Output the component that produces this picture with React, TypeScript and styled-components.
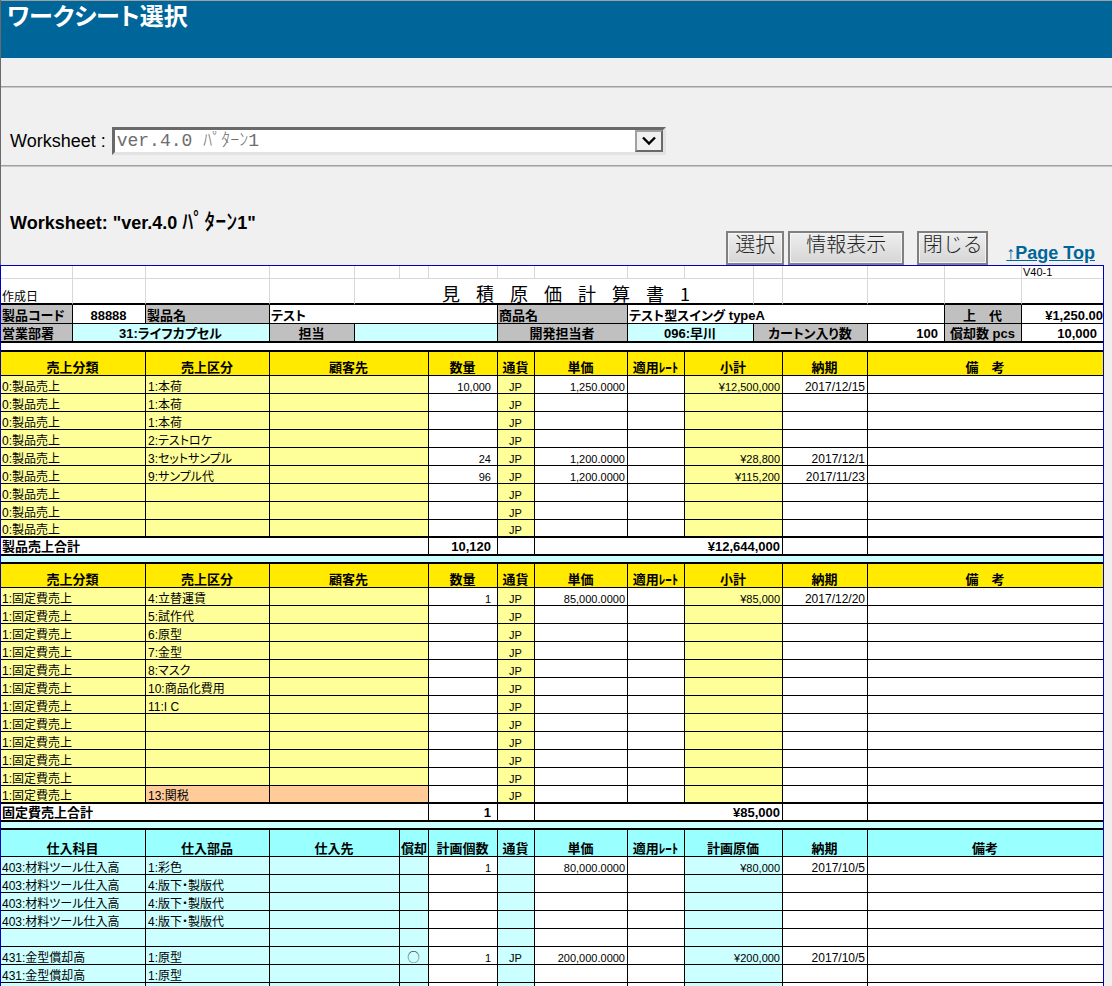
import React from "react";
import styled, { createGlobalStyle, css } from "styled-components";

const latin = `"Liberation Sans", "Noto Sans CJK JP", sans-serif`;
const gothic = `"Noto Sans CJK JP", sans-serif`;

const colors = {
  white: "#ffffff",
  gray: "#c0c0c0",
  cyan: "#ccffff",
  aqua: "#99ffff",
  gold: "#ffea00",
  yellow: "#ffff99",
  peach: "#ffcc99",
};
type Fill = keyof typeof colors;

const GlobalStyle = createGlobalStyle`
  *, *::before, *::after { box-sizing: border-box; }
  body { margin: 0; background: #f0f0f0; color: #000; font-family: ${latin}; }
`;

const Page = styled.div`
  height: 100vh;
  overflow: hidden;
`;

const Top = styled.div`
  border-left: 1px solid #696969;
`;

const Header = styled.header`
  height: 58px;
  margin-bottom: 28px;
  padding: 0 6px;
  border-top: 1px solid #a0a0a0;
  background: #006699;
  color: #fff;
`;

const Title = styled.h1`
  margin: 0;
  font: bold 24px/28px ${gothic};
  font-feature-settings: "palt";
`;

const Rule = styled.hr`
  height: 2px;
  margin: 0;
  border: 0;
  border-top: 1px solid #a0a0a0;
  background: #c8c8c8;
`;

const Picker = styled.form`
  display: flex;
  align-items: center;
  gap: 6px;
  height: 77px;
  padding: 29px 9px 0;
  font-size: 18px;
`;

const SelectFrame = styled.span`
  display: flex;
  width: 554px;
  height: 28px;
  border: 3px solid;
  border-color: #696969 #e3e3e3 #e3e3e3 #696969;
  background: #fff;
`;

const Select = styled.select`
  flex: 1;
  min-width: 0;
  padding: 0 2px;
  border: 0;
  appearance: none;
  background: transparent;
  color: #6d6d6d;
  font: 300 18px/20px "Liberation Mono", "Noto Sans CJK JP", monospace;
`;

const SelectArrow = styled.span`
  display: flex;
  align-items: center;
  justify-content: center;
  width: 28px;
  border: 2px solid;
  border-color: #a0a0a0 #696969 #696969 #a0a0a0;
  background: #f0f0f0;
`;

const SheetBar = styled.div`
  display: flex;
  justify-content: space-between;
  height: 98px;
  padding: 44px 17px 0 9px;
`;

const SheetName = styled.h2`
  margin: 0;
  font-size: 18px;
  line-height: 22px;
`;

const KanaName = styled.span`
  font-size: 22px;
  font-weight: 500;
`;

const Actions = styled.div`
  display: flex;
  align-items: flex-end;
`;

const Button = styled.button<{ $width: number; $after: number }>`
  width: ${(p) => p.$width}px;
  height: 34px;
  margin-right: ${(p) => p.$after}px;
  padding: 0 0 8px;
  border: 2px solid #808080;
  box-shadow: inset 0 0 0 1px #f4f4f4;
  background: linear-gradient(#f0f0f0, #d4d4d4) border-box;
  color: #222;
  font: 300 20px/22px ${gothic};
`;

const TopLink = styled.a`
  color: #006699;
  font-size: 18px;
  font-weight: bold;
  line-height: 24px;
`;

const Sheet = styled.table`
  width: calc(100% - 8px);
  table-layout: fixed;
  border: 1px solid #0000c0;
  border-bottom: 0;
  border-spacing: 0;
  background: #fff;
  font: 12px/11px ${latin};
  font-feature-settings: "palt";
  white-space: nowrap;
`;

const Row = styled.tr<{ $height?: number }>`
  height: ${(p) => p.$height ?? 18}px;
`;

type CellProps = {
  $fill?: Fill;
  $align?: "left" | "center" | "right";
  $bold?: boolean;
  $thick?: boolean;
  $soft?: boolean;
  $pad?: number;
  $small?: boolean;
};

const cellStyle = css<CellProps>`
  padding: 0 ${(p) => p.$pad ?? 2}px 0 1px;
  border: solid ${(p) => (p.$soft ? "#d8d8d8" : "#000")};
  border-width: 0 1px ${(p) => (p.$thick ? 2 : 1)}px 0;
  border-bottom-color: ${(p) => (p.$thick || !p.$soft ? "#000" : "#d8d8d8")};
  background: ${(p) => colors[p.$fill ?? "white"]};
  text-align: ${(p) => p.$align ?? "left"};
  vertical-align: bottom;
  font-weight: ${(p) => (p.$bold ? "bold" : "normal")};
  font-size: ${(p) => (p.$small ? 11 : p.$bold ? 13 : 12)}px;
  line-height: ${(p) => (p.$bold ? 14 : 11)}px;
  &:last-child { border-right: 0; }
`;

const Cell = styled.td<CellProps>`${cellStyle}`;
const HeadCell = styled.th<CellProps>`${cellStyle}`;

const KindCell = styled(Cell)`
  padding: 0 0 0 2px;
`;

const TitleCell = styled(Cell)`
  padding-left: 26px;
  font: 18px/19px ${gothic};
  font-feature-settings: normal;
`;

const Heading = styled.span`
  display: inline-flex;
  gap: 16px;
`;

const columnWidths = [72, 73, 124, 85, 45, 29, 69, 37, 93, 57, 69, 29, 85, 77, 77];

type Line = {
  account: string;
  kind?: string;
  mark?: string;
  qty?: string;
  currency?: string;
  price?: string;
  subtotal?: string;
  date?: string;
  customs?: boolean;
};

const productSales: Line[] = [
  { account: "0:製品売上", kind: "1:本荷", qty: "10,000", currency: "JP", price: "1,250.0000", subtotal: "¥12,500,000", date: "2017/12/15" },
  { account: "0:製品売上", kind: "1:本荷", currency: "JP" },
  { account: "0:製品売上", kind: "1:本荷", currency: "JP" },
  { account: "0:製品売上", kind: "2:テストロケ", currency: "JP" },
  { account: "0:製品売上", kind: "3:セットサンプル", qty: "24", currency: "JP", price: "1,200.0000", subtotal: "¥28,800", date: "2017/12/1" },
  { account: "0:製品売上", kind: "9:サンプル代", qty: "96", currency: "JP", price: "1,200.0000", subtotal: "¥115,200", date: "2017/11/23" },
  { account: "0:製品売上", currency: "JP" },
  { account: "0:製品売上", currency: "JP" },
  { account: "0:製品売上", currency: "JP" },
];

const fixedSales: Line[] = [
  { account: "1:固定費売上", kind: "4:立替運賃", qty: "1", currency: "JP", price: "85,000.0000", subtotal: "¥85,000", date: "2017/12/20" },
  ...["5:試作代", "6:原型", "7:金型", "8:マスク", "10:商品化費用", "11:I C", "", "", "", ""].map((kind) => ({
    account: "1:固定費売上",
    kind,
    currency: "JP",
  })),
  { account: "1:固定費売上", kind: "13:関税", currency: "JP", customs: true },
];

const purchases: Line[] = [
  { account: "403:材料ツール仕入高", kind: "1:彩色", qty: "1", price: "80,000.0000", subtotal: "¥80,000", date: "2017/10/5" },
  { account: "403:材料ツール仕入高", kind: "4:版下・製版代" },
  { account: "403:材料ツール仕入高", kind: "4:版下・製版代" },
  { account: "403:材料ツール仕入高", kind: "4:版下・製版代" },
  { account: "" },
  { account: "431:金型償却高", kind: "1:原型", mark: "◯", qty: "1", currency: "JP", price: "200,000.0000", subtotal: "¥200,000", date: "2017/10/5" },
  { account: "431:金型償却高", kind: "1:原型" },
  { account: "" },
];

type SectionProps = {
  titles: string[];
  lines: Line[];
  head: Fill;
  body: Fill;
  headHeight: number;
  marks?: boolean;
  total?: { label: string; qty: string; amount: string };
};

function Section({ titles, lines, head, body, headHeight, marks, total }: SectionProps) {
  const spans = marks ? [2, 1, 2, 1, 1, 1, 1, 1, 2, 1, 3] : [2, 1, 3, 1, 1, 1, 1, 2, 1, 3];
  return (
    <tbody>
      <Row $height={headHeight}>
        {titles.map((title, i) => (
          <HeadCell key={title} scope="col" colSpan={spans[i]} $fill={head} $align="center" $bold>
            {title}
          </HeadCell>
        ))}
      </Row>
      {lines.map((line, i) => {
        const thick = !!total && i === lines.length - 1;
        const kindFill = line.customs ? "peach" : body;
        return (
          <Row key={i}>
            <Cell colSpan={2} $fill={body} $thick={thick}>{line.account}</Cell>
            <KindCell $fill={kindFill} $thick={thick}>{line.kind}</KindCell>
            <Cell colSpan={marks ? 2 : 3} $fill={kindFill} $thick={thick} />
            {marks && <Cell $fill={body} $align="center">{line.mark}</Cell>}
            <Cell $align="right" $thick={thick} $small $pad={6}>{line.qty}</Cell>
            <Cell $fill={body} $align="center" $thick={thick} $small>{line.currency}</Cell>
            <Cell $align="right" $thick={thick} $small>{line.price}</Cell>
            <Cell $thick={thick} />
            <Cell colSpan={2} $fill={body} $align="right" $thick={thick} $small>{line.subtotal}</Cell>
            <Cell $align="right" $thick={thick}>{line.date}</Cell>
            <Cell colSpan={3} $thick={thick} />
          </Row>
        );
      })}
      {total && (
        <>
          <Row>
            <Cell colSpan={6} $bold $thick>{total.label}</Cell>
            <Cell $bold $thick $align="right" $pad={6}>{total.qty}</Cell>
            <Cell $thick />
            <Cell colSpan={4} $bold $thick $align="right">{total.amount}</Cell>
            <Cell $thick />
            <Cell colSpan={3} $thick />
          </Row>
          <Row $height={8}>
            <Cell colSpan={16} $fill="cyan" $thick />
          </Row>
        </>
      )}
    </tbody>
  );
}

const salesTitles = ["売上分類", "売上区分", "顧客先", "数量", "通貨", "単価", "適用ﾚｰﾄ", "小計", "納期", "備　考"];
const purchaseTitles = ["仕入科目", "仕入部品", "仕入先", "償却", "計画個数", "通貨", "単価", "適用ﾚｰﾄ", "計画原価", "納期", "備考"];

export default function App() {
  return (
    <Page>
      <GlobalStyle />
      <Top id="top">
        <Header>
          <Title>ワークシート選択</Title>
        </Header>
        <Rule />
        <Picker>
          <label htmlFor="worksheet">Worksheet :</label>
          <SelectFrame>
            <Select id="worksheet">
              <option>ver.4.0 ﾊﾟﾀｰﾝ1</option>
            </Select>
            <SelectArrow aria-hidden>
              <svg width="14" height="10" viewBox="0 0 14 10">
                <path d="M1 1.5 7 7.5 13 1.5" fill="none" stroke="#000" strokeWidth="2.4" />
              </svg>
            </SelectArrow>
          </SelectFrame>
        </Picker>
        <Rule />
        <SheetBar>
          <SheetName>
            Worksheet: "ver.4.0 <KanaName>ﾊﾟﾀｰﾝ</KanaName>1"
          </SheetName>
          <Actions>
            <Button type="button" $width={58} $after={4}>選択</Button>
            <Button type="button" $width={116} $after={13}>情報表示</Button>
            <Button type="button" $width={71} $after={18}>閉じる</Button>
            <TopLink href="#top">↑Page Top</TopLink>
          </Actions>
        </SheetBar>
      </Top>
      <Sheet>
        <colgroup>
          {columnWidths.map((width, i) => (
            <col key={i} width={width} />
          ))}
          <col />
        </colgroup>
        <tbody>
          <Row $height={13}>
            {columnWidths.map((_, i) => (
              <Cell key={i} $soft />
            ))}
            <Cell $soft $small>V40-1</Cell>
          </Row>
          <Row $height={26}>
            <Cell $soft $thick>作成日</Cell>
            <Cell $soft $thick />
            <Cell $soft $thick />
            <Cell $soft $thick />
            <TitleCell colSpan={7} $soft $thick $align="center">
              <Heading>
                {[..."見積原価計算書1"].map((char) => (
                  <span key={char}>{char}</span>
                ))}
              </Heading>
            </TitleCell>
            <Cell $soft $thick />
            <Cell $soft $thick />
            <Cell $soft $thick />
            <Cell $soft $thick />
            <Cell $soft $thick />
          </Row>
          <Row $height={19}>
            <Cell $fill="gray" $bold>製品コード</Cell>
            <Cell $bold $align="center">88888</Cell>
            <Cell $fill="gray" $bold>製品名</Cell>
            <Cell colSpan={4} $bold>テスト</Cell>
            <Cell colSpan={2} $fill="gray" $bold>商品名</Cell>
            <Cell colSpan={5} $bold>テスト型スイング typeA</Cell>
            <Cell $fill="gray" $bold $align="center">上　代</Cell>
            <Cell $bold $align="right" $pad={0}>¥1,250.00</Cell>
          </Row>
          <Row $height={19}>
            <Cell $thick $fill="gray" $bold>営業部署</Cell>
            <Cell $thick colSpan={2} $fill="cyan" $bold $align="center">31:ライフカプセル</Cell>
            <Cell $thick $fill="gray" $bold $align="center">担当</Cell>
            <Cell $thick colSpan={3} $fill="cyan" />
            <Cell $thick colSpan={2} $fill="gray" $bold $align="center">開発担当者</Cell>
            <Cell $thick colSpan={2} $fill="cyan" $bold $align="center">096:早川</Cell>
            <Cell $thick colSpan={2} $fill="gray" $bold $align="center">カートン入り数</Cell>
            <Cell $thick $bold $align="right" $pad={6}>100</Cell>
            <Cell $thick $fill="gray" $bold $align="center">償却数 pcs</Cell>
            <Cell $thick $bold $align="right" $pad={6}>10,000</Cell>
          </Row>
          <Row $height={9}>
            <Cell colSpan={16} $thick />
          </Row>
        </tbody>
        <Section
          titles={salesTitles}
          lines={productSales}
          head="gold"
          body="yellow"
          headHeight={24}
          total={{ label: "製品売上合計", qty: "10,120", amount: "¥12,644,000" }}
        />
        <Section
          titles={salesTitles}
          lines={fixedSales}
          head="gold"
          body="yellow"
          headHeight={24}
          total={{ label: "固定費売上合計", qty: "1", amount: "¥85,000" }}
        />
        <Section titles={purchaseTitles} lines={purchases} head="aqua" body="cyan" headHeight={27} marks />
      </Sheet>
    </Page>
  );
}
